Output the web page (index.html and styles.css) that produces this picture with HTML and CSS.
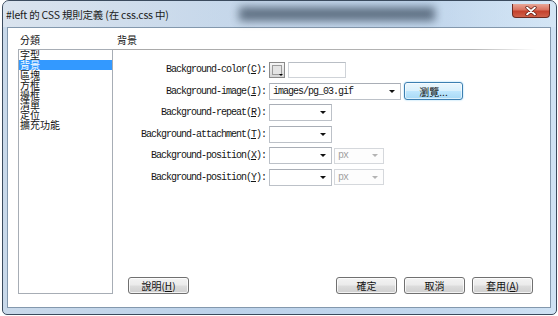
FILE: index.html
```html
<!DOCTYPE html>
<html>
<head>
<meta charset="utf-8">
<link rel="stylesheet" href="styles.css">
</head>
<body>
<div class="window">
  <div class="titlebar">
    <span class="title">#left 的 CSS 規則定義 (在 css.css 中)</span>
    <div class="glass-blur"></div>
    <div class="close">
      <svg width="14" height="10" viewBox="0 0 14 10"><path d="M3 1.5 L11 8.5 M11 1.5 L3 8.5" stroke="#5a1a12" stroke-width="3.2" stroke-linecap="round"/><path d="M3 1.5 L11 8.5 M11 1.5 L3 8.5" stroke="#fff" stroke-width="1.8" stroke-linecap="round"/></svg>
    </div>
  </div>
  <div class="client">
    <div class="cat-label">分類</div>
    <div class="section-title">背景</div>
    <ul class="listbox">
      <li>字型</li>
      <li class="selected">背景</li>
      <li>區塊</li>
      <li>方框</li>
      <li>邊框</li>
      <li>清單</li>
      <li>定位</li>
      <li>擴充功能</li>
    </ul>
    <div class="panel">
      <div class="form">
        <div class="row">
          <span class="lbl">Background-color(<u>C</u>):</span>
          <span class="swatch"><span class="swatch-inner"></span><span class="swatch-arrow"></span></span>
          <span class="textbox"></span>
        </div>
        <div class="row">
          <span class="lbl">Background-image(<u>I</u>):</span>
          <span class="combo wide"><span class="val">images/pg_03.gif</span><span class="arrow"></span></span>
          <span class="btn browse">瀏覽...</span>
        </div>
        <div class="row">
          <span class="lbl">Background-repeat(<u>R</u>):</span>
          <span class="combo"><span class="arrow"></span></span>
        </div>
        <div class="row">
          <span class="lbl">Background-attachment(<u>T</u>):</span>
          <span class="combo"><span class="arrow"></span></span>
        </div>
        <div class="row">
          <span class="lbl">Background-position(<u>X</u>):</span>
          <span class="combo"><span class="arrow"></span></span>
          <span class="combo unit disabled"><span class="val">px</span><span class="arrow"></span></span>
        </div>
        <div class="row">
          <span class="lbl">Background-position(<u>Y</u>):</span>
          <span class="combo"><span class="arrow"></span></span>
          <span class="combo unit disabled"><span class="val">px</span><span class="arrow"></span></span>
        </div>
      </div>
      <div class="buttons">
        <span class="btn">說明(<u>H</u>)</span>
        <span class="btn push">確定</span>
        <span class="btn">取消</span>
        <span class="btn">套用(<u>A</u>)</span>
      </div>
    </div>
  </div>
</div>
</body>
</html>
```

FILE: styles.css
```css
html, body {
  margin: 0;
  padding: 0;
  background: #ffffff;
}

.window {
  box-sizing: border-box;
  width: 555px;
  height: 315px;
  margin-left: 2px;
  border: 1px solid #3b4b5e;
  border-radius: 7px 7px 5px 5px;
  background: linear-gradient(to right, #c9d9ea 0, #bcd2ea 40%, #c3d8ee 80%, #cfe2f4 100%);
  padding: 0 5px 6px 4px;
  display: flex;
  flex-direction: column;
  overflow: hidden;
}

.titlebar {
  height: 26px;
  display: flex;
  align-items: center;
  position: relative;
  margin-left: -4px;
  margin-right: -5px;
  padding-right: 6px;
  background: linear-gradient(to right, rgba(225,232,240,0.7) 0, rgba(210,222,235,0.5) 200px, rgba(190,210,232,0.3) 420px, rgba(215,232,246,0.6) 100%);
}

.title {
  font-family: "Noto Sans CJK TC", "Noto Sans", sans-serif;
  font-size: 10.5px;
  color: #1b1b1b;
  margin-left: 3px;
  letter-spacing: -0.2px;
  position: relative;
  z-index: 1;
}

.glass-blur {
  position: absolute;
  left: 236px;
  top: 6px;
  width: 196px;
  height: 14px;
  background: #4f6073;
  filter: blur(4px);
  opacity: 0.85;
}

.close {
  margin-left: auto;
  align-self: flex-start;
  margin-top: 3px;
  width: 38px;
  height: 14px;
  box-sizing: border-box;
  border: 1px solid #6b2a20;
  border-top: none;
  border-radius: 0 0 4px 4px;
  background: linear-gradient(#e9a797 0, #d9725f 45%, #c4412c 55%, #d0614a 100%);
  display: flex;
  align-items: center;
  justify-content: center;
}

.client {
  flex: 1;
  border: 1px solid #8398ad;
  background: #ffffff;
  display: grid;
  grid-template-columns: 95px 1fr;
  grid-template-rows: 21px 1fr;
  padding: 0 14px 13px 10px;
  font-family: "Noto Sans CJK TC", "Noto Sans", sans-serif;
  font-size: 10px;
  color: #111;
}

.cat-label {
  padding-left: 2px;
  padding-top: 5px;
  line-height: 14px;
}

.section-title {
  padding-left: 4px;
  padding-top: 5px;
  line-height: 14px;
}

.listbox {
  margin: 0;
  padding: 0;
  list-style: none;
  border: 1px solid #a7adb5;
  font-size: 10px;
}

.listbox li {
  line-height: 10px;
  height: 10px;
  padding-left: 1px;
  white-space: nowrap;
}

.listbox li.selected {
  background: #3399ff;
  color: #ffffff;
}

.panel {
  display: flex;
  flex-direction: column;
  background-image: linear-gradient(to right, #a9a9a9 0, #b5b5b5 85%, rgba(200,200,200,0) 100%);
  background-size: 100% 1px;
  background-repeat: no-repeat;
  padding-top: 10px;
}

.form {
  display: flex;
  flex-direction: column;
}

.row {
  height: 21.5px;
  display: flex;
  align-items: center;
}

.lbl {
  width: 153px;
  text-align: right;
  font-family: "Liberation Mono", "DejaVu Sans Mono", monospace;
  font-size: 10px;
  letter-spacing: -1px;
  color: #151515;
  white-space: nowrap;
  margin-right: 3px;
}

.lbl u {
  text-underline-offset: 1px;
}

.swatch {
  box-sizing: border-box;
  width: 16px;
  height: 16px;
  border: 1px solid #8a8a8a;
  background: linear-gradient(#f6f6f6, #d6d6d6);
  position: relative;
  padding: 2px;
  display: flex;
}

.swatch-inner {
  flex: 1;
  border: 1px solid #9c9c9c;
  background: #e4e4e4;
}

.swatch-arrow {
  position: absolute;
  right: 1px;
  bottom: 1px;
  width: 0;
  height: 0;
  border-left: 2px solid transparent;
  border-right: 2px solid transparent;
  border-top: 2px solid #000;
}

.textbox {
  box-sizing: border-box;
  width: 58px;
  height: 16px;
  margin-left: 3px;
  border: 1px solid #cfd3d8;
  border-top-color: #b9bec5;
  background: #fff;
}

.combo {
  box-sizing: border-box;
  width: 63px;
  height: 17px;
  border: 1px solid #bcc1c8;
  border-top-color: #a9aeb6;
  background: #fff;
  display: flex;
  align-items: center;
  padding-left: 3px;
}

.combo.wide {
  width: 132px;
}

.combo .val {
  font-family: "Liberation Mono", "DejaVu Sans Mono", monospace;
  font-size: 10px;
  letter-spacing: -1px;
  color: #151515;
  white-space: nowrap;
}

.combo .arrow {
  margin-left: auto;
  margin-right: 5px;
  width: 0;
  height: 0;
  border-left: 3px solid transparent;
  border-right: 3px solid transparent;
  border-top: 3px solid #111;
}

.combo.unit {
  width: 50px;
  margin-left: 2px;
  height: 16px;
}

.combo.disabled {
  border-color: #d5d8dc;
  background: #fdfdfd;
}

.combo.disabled .val {
  color: #a0a0a0;
}

.combo.disabled .arrow {
  border-top-color: #b4b4b4;
}

.btn {
  box-sizing: border-box;
  width: 61px;
  height: 17px;
  border: 1px solid #707070;
  border-radius: 3px;
  background: linear-gradient(#f3f3f3 0, #ebebeb 48%, #dddddd 52%, #cfcfcf 100%);
  box-shadow: inset 0 0 0 1px rgba(255,255,255,0.75);
  display: flex;
  align-items: center;
  justify-content: center;
  font-family: "Noto Sans CJK TC", "Noto Sans", sans-serif;
  font-size: 10px;
  color: #111;
  white-space: nowrap;
}

.btn.browse {
  width: 59px;
  height: 18px;
  margin-left: 3px;
  border-color: #3c7fb1;
  background: linear-gradient(#eaf6fd 0, #d9f0fc 48%, #bee6fd 52%, #a7d9f5 100%);
  box-shadow: inset 0 0 0 1px rgba(255,255,255,0.6), 0 0 2px #8fd0f5;
}

.buttons {
  margin-top: auto;
  display: flex;
  gap: 7px;
  padding: 0 3px 0 15px;
}

.buttons .push {
  margin-left: auto;
}
```
